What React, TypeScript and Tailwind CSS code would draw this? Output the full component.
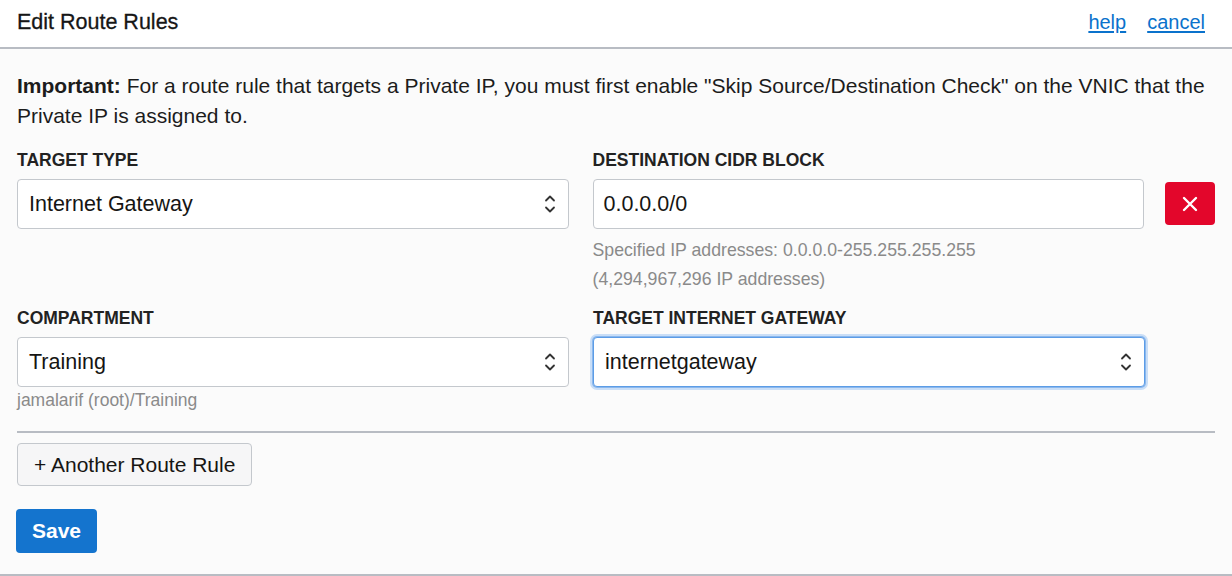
import React from 'react';

const font = { fontFamily: '"Liberation Sans", Arial, sans-serif' };

const Chevrons: React.FC = () => (
  <svg width="12" height="22" viewBox="0 0 12 22" fill="none" stroke="#333" strokeWidth="1.8" strokeLinecap="round" strokeLinejoin="round">
    <path d="M2 7.5 L6 3.5 L10 7.5" />
    <path d="M2 14.5 L6 18.5 L10 14.5" />
  </svg>
);

interface SelectBoxProps {
  value: string;
  focused?: boolean;
}

const SelectBox: React.FC<SelectBoxProps> = ({ value, focused = false }) => (
  <div
    className={`flex h-[50px] items-center justify-between rounded-[4px] bg-white pl-[11px] pr-[12px] text-[21.5px] text-[#161513] ${
      focused
        ? 'border border-[#5c9ce6] shadow-[0_0_0_1px_#8ab8ee,0_0_0_3px_#c9def7]'
        : 'border border-[#c4c8cd]'
    }`}
  >
    <span>{value}</span>
    <Chevrons />
  </div>
);

const Label: React.FC<{ children: React.ReactNode }> = ({ children }) => (
  <div className="mb-[9px] text-[17.5px] font-bold uppercase leading-[20px] text-[#222]">
    {children}
  </div>
);

export default function App() {
  return (
    <div className="h-[576px] w-[1232px] overflow-hidden border-b-2 border-[#b8bcc3] bg-[#fbfbfb]" style={font}>
      {/* Header */}
      <div className="flex h-[49px] items-center justify-between border-b-2 border-[#b8bcc3] bg-white px-[17px] pb-[3px]">
        <h1 className="text-[21.5px] text-[#161616] [-webkit-text-stroke:0.3px_#161616]">Edit Route Rules</h1>
        <div className="flex gap-[21px] pr-[10px] text-[20px] text-[#0a72cc]">
          <a className="underline underline-offset-2">help</a>
          <a className="underline underline-offset-2">cancel</a>
        </div>
      </div>

      {/* Body */}
      <div className="px-[17px] pt-[22px]">
        <p className="text-[21px] leading-[30px] text-[#1c1c1c]">
          <span className="font-bold">Important:</span> For a route rule that targets a Private IP, you must first enable
          "Skip Source/Destination Check" on the VNIC that the Private IP is assigned to.
        </p>

        <div className="mt-[19px] flex gap-[24px]">
          <div className="w-[552px]">
            <Label>Target Type</Label>
            <SelectBox value="Internet Gateway" />
          </div>
          <div className="w-[552px]">
            <Label>Destination CIDR Block</Label>
            <div className="flex h-[50px] items-center rounded-[4px] border border-[#c4c8cd] bg-white px-[10px] text-[21.5px] text-[#161513]">
              0.0.0.0/0
            </div>
            <div className="mt-[7px] text-[17.7px] leading-[29px] text-[#8a8a8a]">
              <div>Specified IP addresses: 0.0.0.0-255.255.255.255</div>
              <div>(4,294,967,296 IP addresses)</div>
            </div>
          </div>
          <div className="ml-[-3px] pt-[32px]">
            <button className="flex h-[43px] w-[50px] items-center justify-center rounded-[4px] bg-[#e3062b]">
              <svg width="16" height="16" viewBox="0 0 16 16" stroke="white" strokeWidth="2.4" strokeLinecap="round">
                <path d="M2 2 L14 14 M14 2 L2 14" />
              </svg>
            </button>
          </div>
        </div>

        <div className="mt-[14px] flex gap-[24px]">
          <div className="w-[552px]">
            <Label>Compartment</Label>
            <SelectBox value="Training" />
            <div className="mt-[3px] text-[17.5px] leading-[20px] text-[#8a8a8a]">jamalarif (root)/Training</div>
          </div>
          <div className="w-[552px]">
            <Label>Target Internet Gateway</Label>
            <SelectBox value="internetgateway" focused />
          </div>
        </div>

        <div className="mt-[21px] border-t-2 border-[#b8bcc3]" />

        <button className="mt-[10px] h-[43px] rounded-[4px] border border-[#c4c8cd] bg-[#f6f6f7] px-[16px] text-[21px] text-[#161513]">
          + Another Route Rule
        </button>

        <div>
          <button className="-ml-px mt-[23px] h-[44px] rounded-[4px] bg-[#1474ce] px-[16px] text-[21px] font-bold text-white">
            Save
          </button>
        </div>
      </div>
    </div>
  );
}
